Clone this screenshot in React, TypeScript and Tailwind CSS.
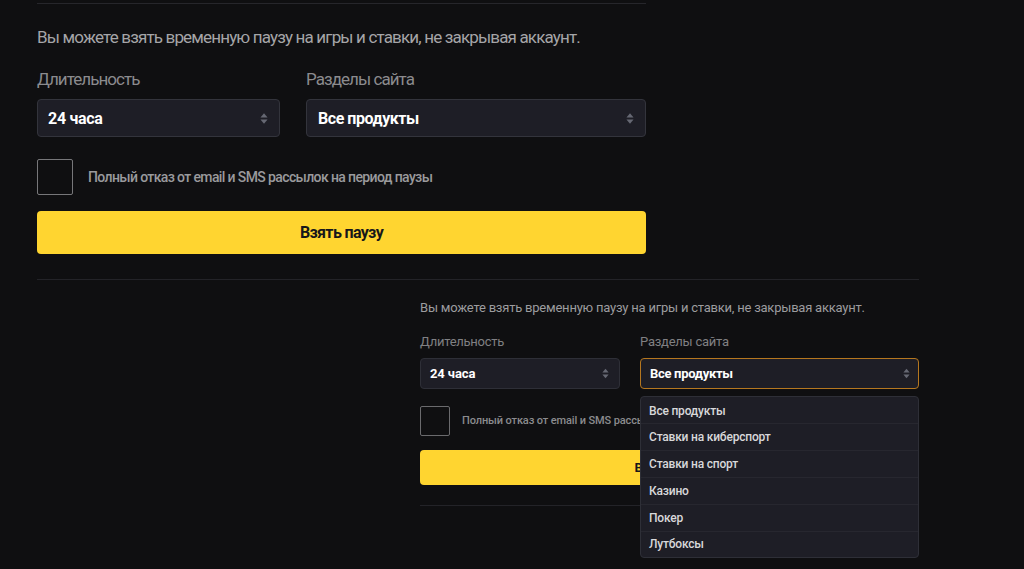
const Arrows = ({ small }: { small?: boolean }) => (
  <svg className={small ? 'w-[7px] h-[11px] shrink-0' : 'w-[8px] h-[13px] shrink-0'} viewBox="0 0 9 14" fill="#666873">
    <path d="M4.5 1 8.5 5.8H.5z" />
    <path d="M4.5 13 8.5 8.2H.5z" />
  </svg>
);

const options = ['Все продукты', 'Ставки на киберспорт', 'Ставки на спорт', 'Казино', 'Покер', 'Лутбоксы'];

export default function App() {
  return (
    <div className="relative w-[1024px] h-[569px] overflow-hidden bg-[#0f0f11] font-['Roboto',sans-serif]">
      {/* Top form, bigger copy */}
      <div className="ml-[37px] w-[609px] pt-[3px]">
        <div className="h-px bg-[#26262b]" />
        <p className="mt-[23px] text-[17px] leading-[20px] tracking-[-0.84px] text-[#a5a5a8]">
          Вы можете взять временную паузу на игры и ставки, не закрывая аккаунт.
        </p>
        <div className="mt-[22px] flex gap-[26px]">
          <div className="w-[243px]">
            <div className="text-[17px] leading-[20px] tracking-[-0.95px] text-[#8b8b8e]">Длительность</div>
            <div className="mt-[10px] flex h-[38px] items-center justify-between rounded-[4px] border border-[#33343c] bg-[#1e1e26] pl-[10px] pr-[11px] pt-px">
              <span className="text-[16px] font-bold tracking-[-0.3px] text-white">24 часа</span>
              <Arrows />
            </div>
          </div>
          <div className="flex-1">
            <div className="text-[17px] leading-[20px] tracking-[-0.95px] text-[#8b8b8e]">Разделы сайта</div>
            <div className="mt-[10px] flex h-[38px] items-center justify-between rounded-[4px] border border-[#33343c] bg-[#1e1e26] pl-[11px] pr-[11px] pt-px">
              <span className="text-[16px] font-bold tracking-[-0.45px] text-white">Все продукты</span>
              <Arrows />
            </div>
          </div>
        </div>
        <div className="mt-[22px] flex items-center gap-[15px]">
          <div className="h-[36px] w-[36px] rounded-[2px] border border-[#77777a]" />
          <span className="text-[14px] font-medium tracking-[-0.62px] text-[#9a9a9d]">
            Полный отказ от email и SMS рассылок на период паузы
          </span>
        </div>
        <button className="mt-[16px] flex h-[43px] w-full items-center justify-center rounded-[4px] bg-[#ffd530] text-[16px] font-bold tracking-[-0.65px] text-[#17171a]">
          Взять паузу
        </button>
      </div>

      <div className="ml-[37px] mt-[25px] h-px w-[882px] bg-[#232328]" />

      {/* Bottom form with the open select */}
      <div className="ml-[420px] w-[499px]">
        <p className="mt-[19px] text-[13px] leading-[17px] tracking-[-0.22px] text-[#9c9c9f]">
          Вы можете взять временную паузу на игры и ставки, не закрывая аккаунт.
        </p>
        <div className="mt-[17px] flex gap-[20px]">
          <div className="w-[200px]">
            <div className="text-[13px] leading-[17px] tracking-[-0.25px] text-[#808083]">Длительность</div>
            <div className="mt-[8px] flex h-[31px] items-center justify-between rounded-[4px] border border-[#2e2f37] bg-[#1e1e26] pl-[9px] pr-[10px]">
              <span className="text-[13px] font-bold tracking-[-0.1px] text-white">24 часа</span>
              <Arrows small />
            </div>
          </div>
          <div className="relative flex-1">
            <div className="text-[13px] leading-[17px] tracking-[-0.25px] text-[#808083]">Разделы сайта</div>
            <div className="mt-[8px] flex h-[31px] items-center justify-between rounded-[4px] border-[1.5px] border-[#b5771f] bg-[#1e1e26] pl-[9px] pr-[8px]">
              <span className="text-[13px] font-bold tracking-[-0.3px] text-white">Все продукты</span>
              <Arrows small />
            </div>
            <div className="absolute left-0 right-0 top-[63px] z-10 rounded-[4px] border border-[#2e2f37] bg-[#1e1e26] pt-[0.7px]">
              {options.map((item, i) => (
                <div
                  key={item}
                  className={`flex items-center px-[8px] text-[12px] font-medium tracking-[-0.2px] text-[#d8d8da] ${i < options.length - 1 ? 'h-[26.8px] border-b border-[#27272f]' : 'h-[25.5px]'}`}
                >
                  {item}
                </div>
              ))}
            </div>
          </div>
        </div>
        <div className="mt-[17px] flex items-center gap-[12px]">
          <div className="h-[30px] w-[30px] shrink-0 rounded-[2px] border border-[#6a6a6d]" />
          <span className="whitespace-nowrap pt-px text-[11px] font-medium tracking-[-0.12px] text-[#8b8b8e]">
            Полный отказ от email и SMS рассылок на период паузы
          </span>
        </div>
        <button className="mt-[14px] flex h-[35px] w-full items-center justify-center rounded-[4px] bg-[#ffd530] text-[13px] font-bold tracking-[-0.3px] text-[#17171a]">
          Взять паузу
        </button>
        <div className="mt-[20px] h-px bg-[#232328]" />
      </div>
    </div>
  );
}
